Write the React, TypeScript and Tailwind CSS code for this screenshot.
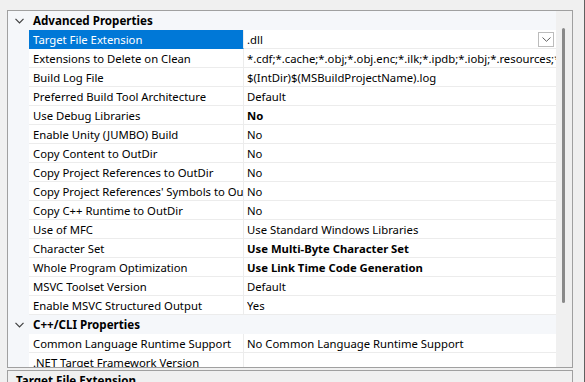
import React from 'react'

interface Row {
  label: string
  value: string
  bold?: boolean
  selected?: boolean
  combo?: boolean
}

const advanced: Row[] = [
  { label: 'Target File Extension', value: '.dll', selected: true, combo: true },
  { label: 'Extensions to Delete on Clean', value: '*.cdf;*.cache;*.obj;*.obj.enc;*.ilk;*.ipdb;*.iobj;*.resources;*.tlb;*.tli;*.tlh;*.tmp;*.rsp' },
  { label: 'Build Log File', value: '$(IntDir)$(MSBuildProjectName).log' },
  { label: 'Preferred Build Tool Architecture', value: 'Default' },
  { label: 'Use Debug Libraries', value: 'No', bold: true },
  { label: 'Enable Unity (JUMBO) Build', value: 'No' },
  { label: 'Copy Content to OutDir', value: 'No' },
  { label: 'Copy Project References to OutDir', value: 'No' },
  { label: "Copy Project References' Symbols to OutDir", value: 'No' },
  { label: 'Copy C++ Runtime to OutDir', value: 'No' },
  { label: 'Use of MFC', value: 'Use Standard Windows Libraries' },
  { label: 'Character Set', value: 'Use Multi-Byte Character Set', bold: true },
  { label: 'Whole Program Optimization', value: 'Use Link Time Code Generation', bold: true },
  { label: 'MSVC Toolset Version', value: 'Default' },
  { label: 'Enable MSVC Structured Output', value: 'Yes' },
]

const cli: Row[] = [
  { label: 'Common Language Runtime Support', value: 'No Common Language Runtime Support' },
  { label: '.NET Target Framework Version', value: '' },
]

function Chevron() {
  return (
    <svg width="9" height="6" viewBox="0 0 9 6" className="block">
      <path d="M0.5 0.8 L4.5 4.8 L8.5 0.8" fill="none" stroke="#404040" strokeWidth="1.2" />
    </svg>
  )
}

function Category({ title }: { title: string }) {
  return (
    <div className="flex h-[19px] items-center bg-[#f5f7fa]">
      <div className="w-[21px] flex justify-center pl-[2px]"><Chevron /></div>
      <div className="pl-[4px] pt-[1px] font-bold text-[11.6px] text-black">{title}</div>
    </div>
  )
}

function PropRow({ row }: { row: Row }) {
  return (
    <div className="flex h-[19px]">
      <div className="w-[21px] shrink-0 bg-[#f5f7fa]" />
      <div className={"w-[215px] shrink-0 border-r border-b whitespace-nowrap overflow-hidden pl-[4px] pt-[1px] leading-[17px] " + (row.selected ? 'bg-[#0078d7] text-white border-[#0078d7] border-r-[#ececec]' : 'bg-white text-black border-[#ececec]')}>
        {row.label}
      </div>
      <div className={"flex-1 min-w-0 flex items-center border-b border-[#ececec] bg-white pl-[3px] " + (row.bold ? 'font-bold' : '')}>
        <div className="flex-1 whitespace-nowrap overflow-hidden pt-[1px] leading-[17px]">{row.value}</div>
        {row.combo && (
          <div className="mr-[2px] w-[16px] h-[15px] border border-[#bcbcbc] bg-white flex items-center justify-center">
            <svg width="9" height="5" viewBox="0 0 9 5"><path d="M0.5 0.5 L4.5 4.3 L8.5 0.5" fill="none" stroke="#606060" strokeWidth="1" /></svg>
          </div>
        )}
      </div>
    </div>
  )
}

export default function App() {
  return (
    <div className="w-[585px] h-[382px] bg-[#f0f0f0] overflow-hidden border-r border-[#606060] text-[11.3px] text-black pt-[10px]" style={{ fontFamily: '"Noto Sans", "Open Sans", sans-serif' }}>
      <div className="ml-[7px] w-[566px] h-[358px] border border-[#a0a0a0] flex overflow-hidden">
        {/* property grid */}
        <div className="w-[548px] shrink-0 bg-white">
          <Category title="Advanced Properties" />
          {advanced.map(r => <PropRow key={r.label} row={r} />)}
          <Category title="C++/CLI Properties" />
          {cli.map(r => <PropRow key={r.label} row={r} />)}
        </div>
        {/* scrollbar */}
        <div className="flex-1 bg-[#f0f0f0] pt-[17px] pl-[6px]">
          <div className="w-[3px] h-[275px] rounded-full bg-[#8a8a8a]" />
        </div>
      </div>
      <div className="ml-[7px] mt-[2px] w-[566px] h-[20px] border border-[#a0a0a0] pl-[8px] pt-[2px] font-bold text-[11.6px] leading-[16px]">
        Target File Extension
      </div>
    </div>
  )
}
